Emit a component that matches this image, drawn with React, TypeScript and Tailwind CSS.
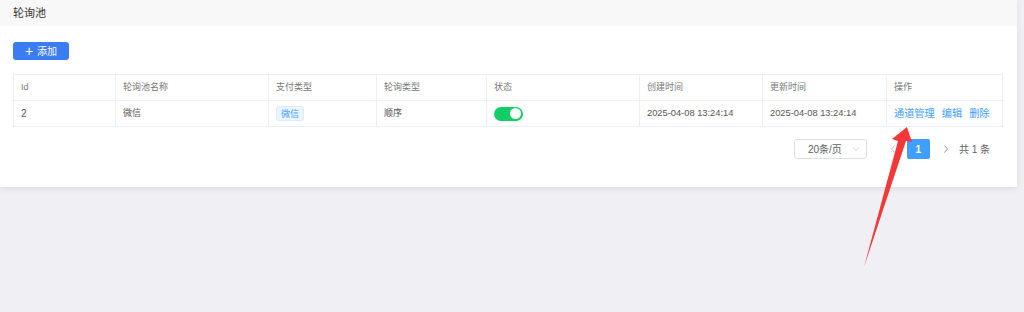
const font = { fontFamily: '"Liberation Sans", "Noto Sans CJK SC", sans-serif' };

const cols = [
  { label: "Id", w: "w-[102px]" },
  { label: "轮询池名称", w: "w-[153px]" },
  { label: "支付类型", w: "w-[108px]" },
  { label: "轮询类型", w: "w-[110px]" },
  { label: "状态", w: "w-[153px]" },
  { label: "创建时间", w: "w-[123px]" },
  { label: "更新时间", w: "w-[124px]" },
  { label: "操作", w: "flex-1" },
];

function Arrow() {
  return (
    <svg
      className="absolute left-0 top-0 pointer-events-none"
      width="1024"
      height="312"
      viewBox="0 0 1024 312"
    >
      <polygon
        points="907,127 912,142 906,141 864,267 898,141 892,139"
        fill="#f43838"
      />
    </svg>
  );
}

export default function App() {
  return (
    <div className="relative w-[1024px] h-[312px] bg-[#efeff4] overflow-hidden" style={font}>
      <div className="w-[1017px] h-[187px] bg-white shadow-[0_2px_6px_rgba(0,0,0,0.08)]">
        <div className="h-[26px] bg-[#f8f8f8] flex items-center px-[13px] text-[11px] text-[#333]">
          轮询池
        </div>
        <div className="px-[13px] pt-[16px]">
          <button className="h-[18px] w-[56px] rounded-[3px] bg-[#3b7cf3] text-white text-[10px] flex items-center justify-center gap-[4px]">
            <span className="text-[14px] leading-none font-light">+</span>
            <span>添加</span>
          </button>
          <div className="mt-[14px] w-[990px] border border-[#ebeef5] text-[9px]">
            <div className="flex h-[26px] border-b border-[#ebeef5] text-[#777]">
              {cols.map((c, i) => (
                <div
                  key={i}
                  className={`${c.w} flex items-center px-[7px] ${i < cols.length - 1 ? "border-r border-[#ebeef5]" : ""}`}
                >
                  {c.label}
                </div>
              ))}
            </div>
            <div className="flex h-[25px] text-[#555]">
              <div className="w-[102px] flex items-center px-[7px] border-r border-[#ebeef5] text-[10px]">2</div>
              <div className="w-[153px] flex items-center px-[7px] border-r border-[#ebeef5]">微信</div>
              <div className="w-[108px] flex items-center px-[7px] border-r border-[#ebeef5]">
                <span className="px-[4px] h-[15px] leading-[14px] rounded-[3px] bg-[#ecf5ff] text-[#409eff] border border-[#d9ecff]">
                  微信
                </span>
              </div>
              <div className="w-[110px] flex items-center px-[7px] border-r border-[#ebeef5]">顺序</div>
              <div className="w-[153px] flex items-center px-[7px] border-r border-[#ebeef5]">
                <div className="w-[29px] h-[14px] rounded-full bg-[#13ce66] flex items-center justify-end pr-[2px]">
                  <div className="w-[11px] h-[11px] rounded-full bg-white" />
                </div>
              </div>
              <div className="w-[123px] flex items-center px-[7px] border-r border-[#ebeef5] text-[9.3px] whitespace-nowrap">
                2025-04-08 13:24:14
              </div>
              <div className="w-[124px] flex items-center px-[7px] border-r border-[#ebeef5] text-[9.3px] whitespace-nowrap">
                2025-04-08 13:24:14
              </div>
              <div className="flex-1 flex items-center px-[7px] gap-[7px] text-[#409eff] text-[10.2px] whitespace-nowrap">
                <span>通道管理</span>
                <span>编辑</span>
                <span>删除</span>
              </div>
            </div>
          </div>
          <div className="flex items-center justify-end mt-[12px] pr-[14px] text-[10px] text-[#606266]">
            <div className="w-[73px] h-[20px] border border-[#dcdfe6] rounded-[3px] flex items-center justify-between pl-[13px] pr-[6px]">
              <span>20条/页</span>
              <svg width="8" height="8" viewBox="0 0 8 8">
                <path d="M1 2.5 L4 5.5 L7 2.5" fill="none" stroke="#c0c4cc" strokeWidth="0.8" />
              </svg>
            </div>
            <svg className="ml-[22px]" width="8" height="10" viewBox="0 0 8 10">
              <path d="M5.5 1.5 L2.5 5 L5.5 8.5" fill="none" stroke="#c0c4cc" strokeWidth="1" />
            </svg>
            <div className="ml-[10px] w-[23px] h-[20px] bg-[#409eff] text-white font-bold flex items-center justify-center rounded-[2px]">
              1
            </div>
            <svg className="ml-[12px]" width="8" height="10" viewBox="0 0 8 10">
              <path d="M2.5 1.5 L5.5 5 L2.5 8.5" fill="none" stroke="#909399" strokeWidth="1" />
            </svg>
            <span className="ml-[9px]">共 1 条</span>
          </div>
        </div>
      </div>
      <Arrow />
    </div>
  );
}
